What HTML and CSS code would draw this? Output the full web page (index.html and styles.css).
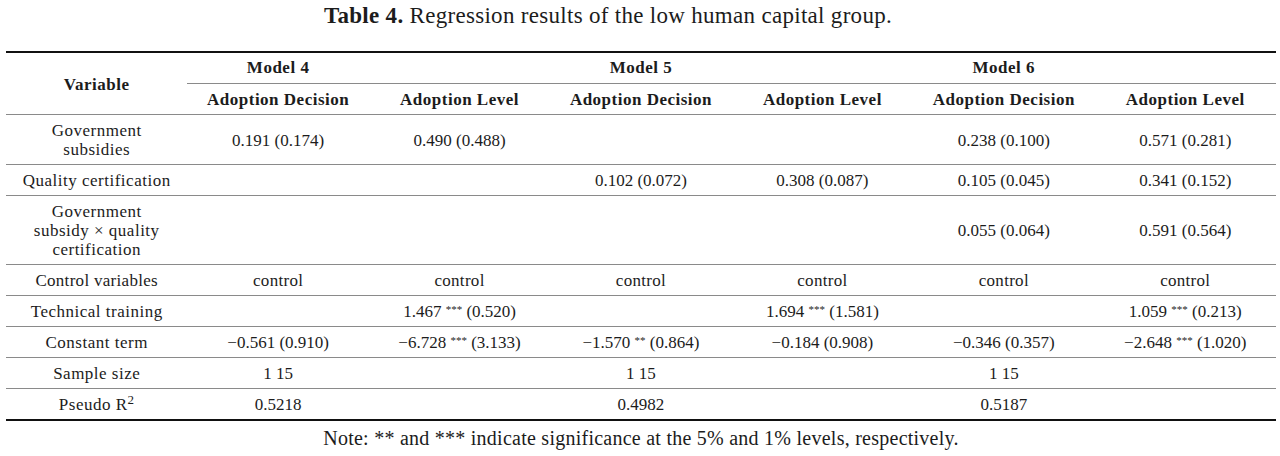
FILE: index.html
```html
<!DOCTYPE html>
<html>
<head>
<meta charset="utf-8">
<link rel="stylesheet" href="styles.css">
</head>
<body>
<div class="page">
  <div class="caption"><b>Table 4.</b> Regression results of the low human capital group.</div>
  <table class="reg">
    <colgroup>
      <col class="c"><col class="c"><col class="c"><col class="c"><col class="c"><col class="c"><col class="c">
    </colgroup>
    <thead>
      <tr class="h1">
        <th rowspan="2" class="var">Variable</th>
        <th class="mh">Model 4</th>
        <th class="mh"></th>
        <th class="mh">Model 5</th>
        <th class="mh"></th>
        <th class="mh">Model 6</th>
        <th class="mh"></th>
      </tr>
      <tr class="h2">
        <th>Adoption Decision</th>
        <th>Adoption Level</th>
        <th>Adoption Decision</th>
        <th>Adoption Level</th>
        <th>Adoption Decision</th>
        <th>Adoption Level</th>
      </tr>
    </thead>
    <tbody>
      <tr>
        <td class="lbl">Government<br>subsidies</td>
        <td>0.191 (0.174)</td>
        <td>0.490 (0.488)</td>
        <td></td>
        <td></td>
        <td>0.238 (0.100)</td>
        <td>0.571 (0.281)</td>
      </tr>
      <tr>
        <td class="lbl">Quality certification</td>
        <td></td>
        <td></td>
        <td>0.102 (0.072)</td>
        <td>0.308 (0.087)</td>
        <td>0.105 (0.045)</td>
        <td>0.341 (0.152)</td>
      </tr>
      <tr>
        <td class="lbl">Government<br>subsidy × quality<br>certification</td>
        <td></td>
        <td></td>
        <td></td>
        <td></td>
        <td>0.055 (0.064)</td>
        <td>0.591 (0.564)</td>
      </tr>
      <tr class="ctrl">
        <td class="lbl">Control variables</td>
        <td>control</td>
        <td>control</td>
        <td>control</td>
        <td>control</td>
        <td>control</td>
        <td>control</td>
      </tr>
      <tr>
        <td class="lbl">Technical training</td>
        <td></td>
        <td>1.467 <span class="sig">***</span> (0.520)</td>
        <td></td>
        <td>1.694 <span class="sig">***</span> (1.581)</td>
        <td></td>
        <td>1.059 <span class="sig">***</span> (0.213)</td>
      </tr>
      <tr>
        <td class="lbl">Constant term</td>
        <td>−0.561 (0.910)</td>
        <td>−6.728 <span class="sig">***</span> (3.133)</td>
        <td>−1.570 <span class="sig">**</span> (0.864)</td>
        <td>−0.184 (0.908)</td>
        <td>−0.346 (0.357)</td>
        <td>−2.648 <span class="sig">***</span> (1.020)</td>
      </tr>
      <tr>
        <td class="lbl">Sample size</td>
        <td>1 15</td>
        <td></td>
        <td>1 15</td>
        <td></td>
        <td>1 15</td>
        <td></td>
      </tr>
      <tr class="last">
        <td class="lbl">Pseudo R<sup>2</sup></td>
        <td>0.5218</td>
        <td></td>
        <td>0.4982</td>
        <td></td>
        <td>0.5187</td>
        <td></td>
      </tr>
    </tbody>
  </table>
  <div class="note">Note: ** and *** indicate significance at the 5% and 1% levels, respectively.</div>
</div>
</body>
</html>
```

FILE: styles.css
```css
html, body {
  margin: 0;
  padding: 0;
  background: #ffffff;
}

body {
  font-family: "Liberation Serif", "Times New Roman", serif;
  color: #1c1c1c;
}

.page {
  padding: 0 4px 0 6px;
}

.caption {
  text-align: center;
  font-size: 23px;
  letter-spacing: 0.3px;
  line-height: 26px;
  padding-top: 3px;
  padding-right: 66px;
  margin-bottom: 22px;
}

.caption b {
  font-weight: bold;
}

.reg {
  width: 100%;
  table-layout: fixed;
  border-collapse: separate;
  border-spacing: 0;
  border-top: 2px solid #111;
  border-bottom: 2px solid #111;
  font-size: 17px;
}

.reg th,
.reg td {
  text-align: center;
  vertical-align: middle;
  line-height: 19px;
  padding: 6px 0 5px;
  border-bottom: 1px solid #8a8a8a;
  white-space: nowrap;
}

.reg th {
  font-weight: bold;
  font-size: 17px;
  letter-spacing: 0.5px;
}

.reg .h1 th.mh {
  padding: 5px 0 6px;
}

.reg .h1 th.var {
  border-bottom: 1px solid #8a8a8a;
}

.reg td.lbl {
  letter-spacing: 0.5px;
}

.reg tr.ctrl td {
  letter-spacing: 0.3px;
}

.reg tr.last td {
  border-bottom: none;
}

.sig {
  font-size: 11px;
  vertical-align: 4px;
  line-height: 0;
}

.reg sup {
  font-size: 13px;
  line-height: 0;
  vertical-align: 6px;
}

.note {
  text-align: center;
  font-size: 20px;
  letter-spacing: 0.25px;
  line-height: 24px;
  padding-top: 5px;
}
```
